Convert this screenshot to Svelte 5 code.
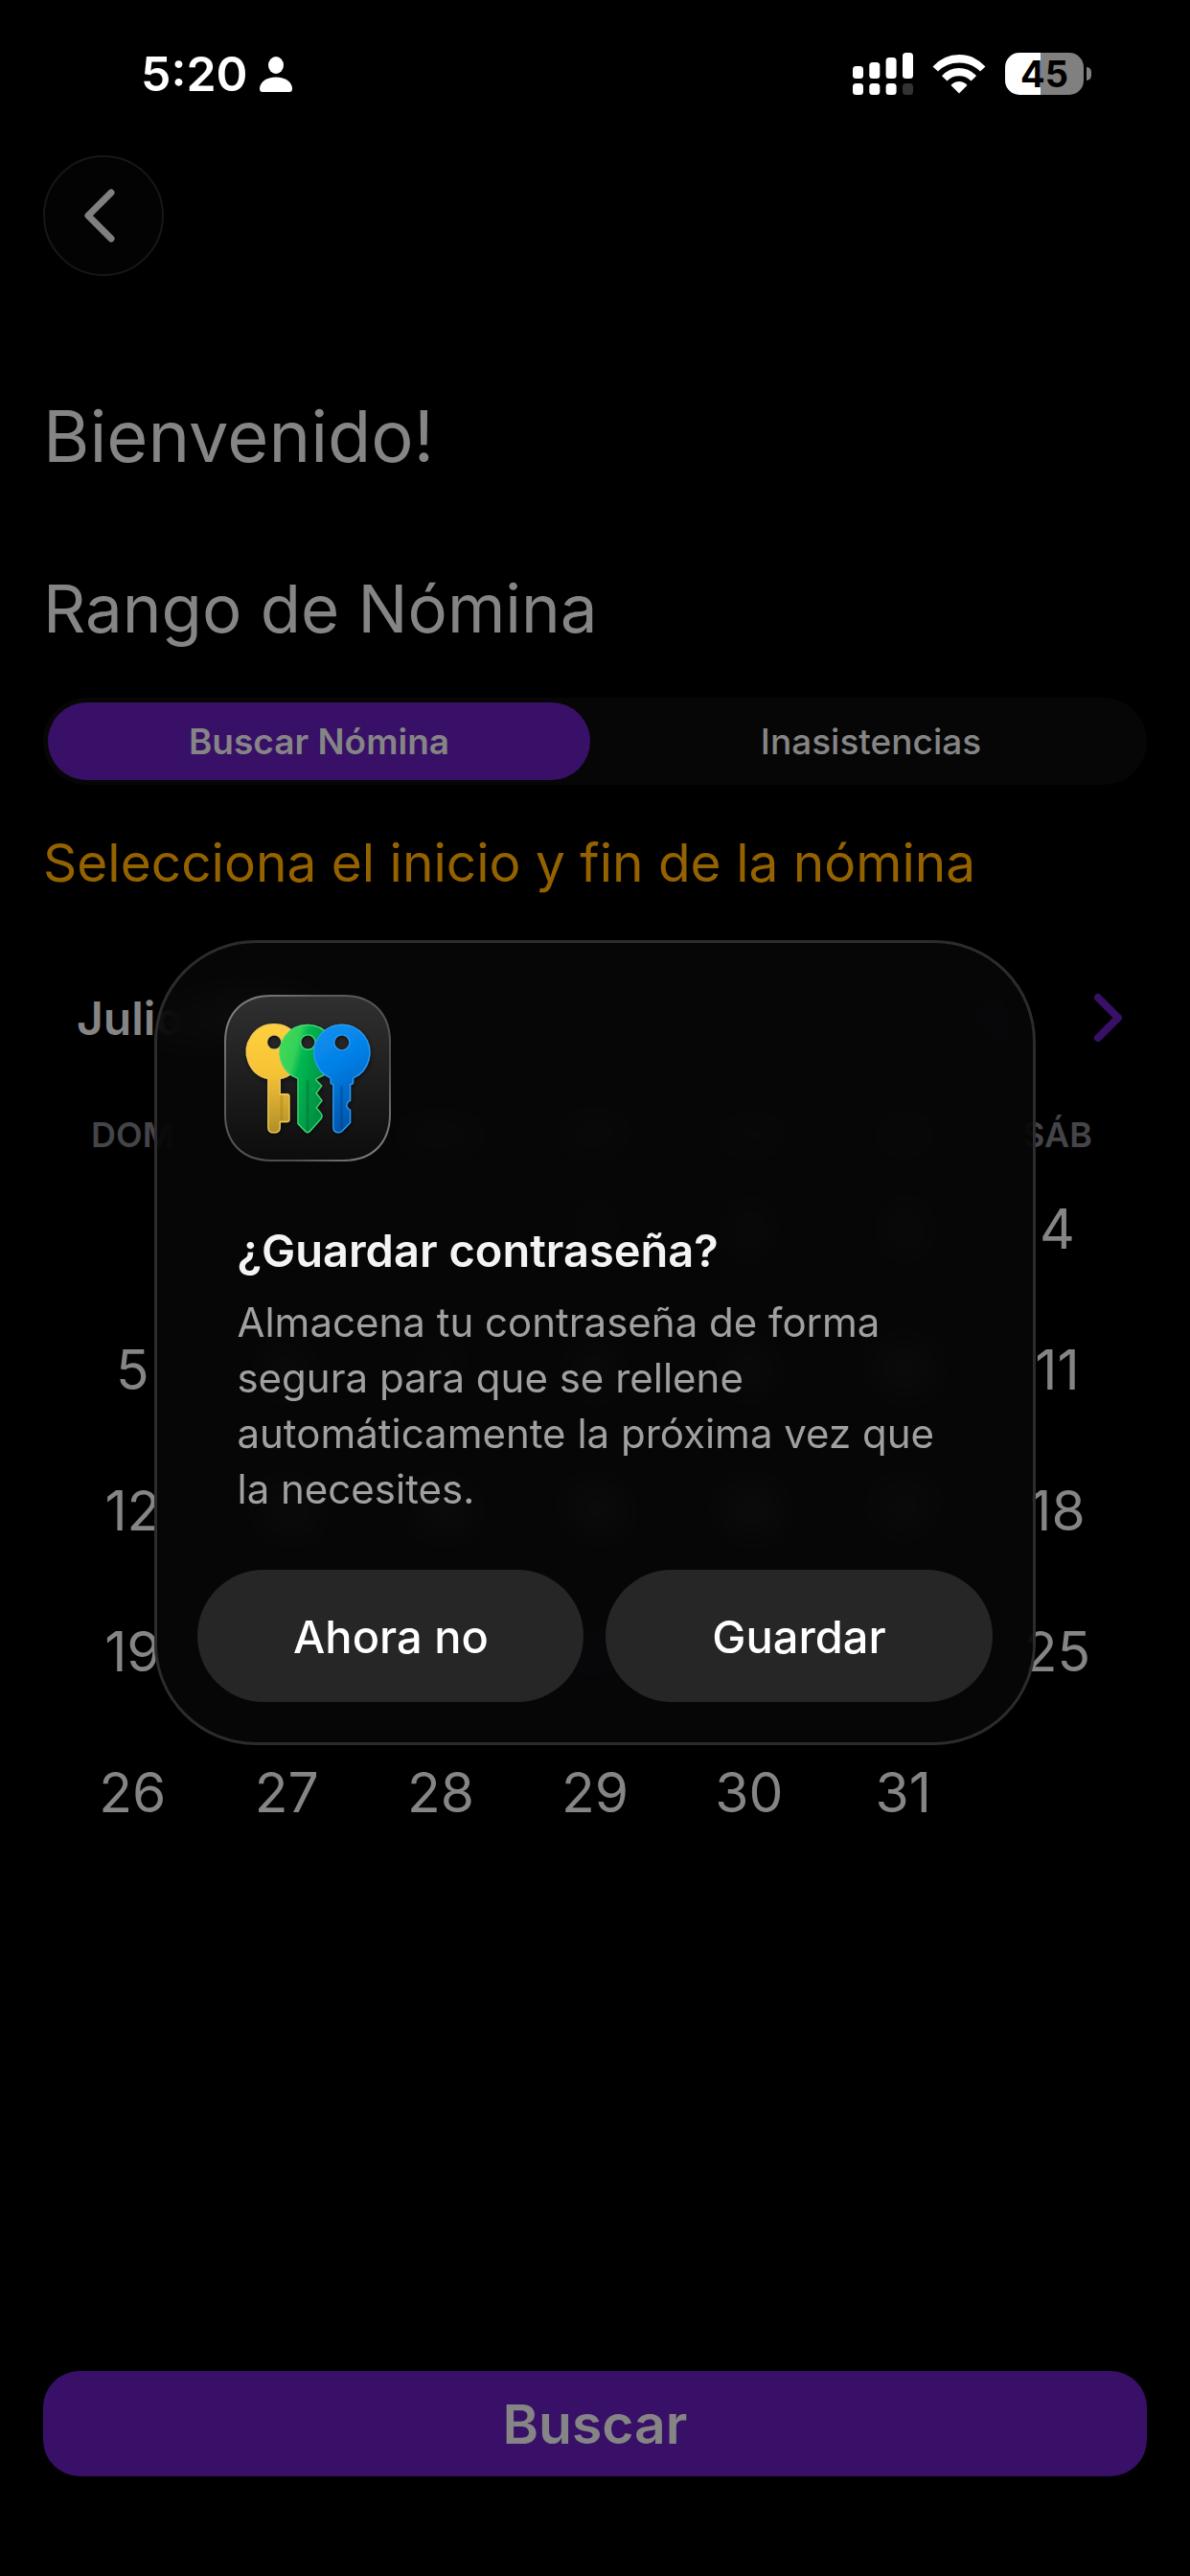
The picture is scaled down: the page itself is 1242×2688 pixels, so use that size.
<script>
  const weekdays = ["DOM", "LUN", "MAR", "MIÉ", "JUE", "VIE", "SÁB"];
  const tabs = ["Buscar Nómina", "Inasistencias"];
  const firstWeekday = 3;
  const daysInMonth = 31;
  const today = 22;

  let activeTab = $state(0);

  const weeks = [];
  for (let start = 1 - firstWeekday; start <= daysInMonth; start += 7) {
    weeks.push(
      Array.from({ length: 7 }, (_, i) => {
        const day = start + i;
        return day >= 1 && day <= daysInMonth ? day : null;
      })
    );
  }
</script>

<div class="screen">
  <div class="status">
    <div class="status-left">
      <span class="time">5:20</span>
      <svg width="34" height="37" viewBox="0 0 34 37" fill="#fff">
        <ellipse cx="17" cy="9" rx="8" ry="9" />
        <path d="M3 37Q0 37 0 33.500C0 27 7 21.500 17 21.500S34 27 34 33.500Q34 37 31 37Z" />
      </svg>
    </div>
    <div class="status-right">
      <svg width="63" height="44" viewBox="0 0 63 44" fill="#fff">
        <rect x="0" y="14" width="11" height="13" rx="3.500" />
        <rect x="17.300" y="10" width="11" height="17" rx="3.500" />
        <rect x="34.600" y="5" width="11" height="22" rx="3.500" />
        <rect x="52" y="0" width="11" height="27" rx="3.500" />
        <rect x="0" y="32" width="11" height="12" rx="3.500" />
        <rect x="17.300" y="32" width="11" height="12" rx="3.500" />
        <rect x="34.600" y="32" width="11" height="12" rx="3.500" />
        <rect x="52" y="32" width="11" height="12" rx="3.500" fill="#333" />
      </svg>
      <svg class="wifi" width="56" height="42" viewBox="0 0 56 42" fill="#fff">
        <path d="M0.500 13.500Q12 1 28 1T55.500 13.500L50 18.500Q41 9.500 28 9.500T6 18.500Z" />
        <path d="M10 23.200Q17.500 15 28 15T46 23.200L40.500 28.500Q35.500 23.300 28 23.300T15.500 28.500Z" />
        <path d="M19.500 33Q23 29 28 29T36.500 33L28 41.500Z" />
      </svg>
      <div class="battery"><span>45</span></div>
    </div>
  </div>

  <main>
    <button class="back" aria-label="Atrás">
      <svg width="32" height="56" viewBox="0 0 32 56" fill="none" stroke="#808080" stroke-width="7" stroke-linecap="round" stroke-linejoin="round">
        <path d="M28 4L4 28L28 52" />
      </svg>
    </button>

    <h1>Bienvenido!</h1>
    <h2>Rango de Nómina</h2>

    <div class="tabs">
      {#each tabs as tab, i}
        <button class:active={activeTab === i} onclick={() => (activeTab = i)}>{tab}</button>
      {/each}
    </div>

    <p class="hint">Selecciona el inicio y fin de la nómina</p>

    <section class="calendar">
      <div class="month">
        <span>Julio 2026</span>
        <svg class="more" width="20" height="34" viewBox="0 0 32 56" fill="none">
          <path d="M4 4L28 28L4 52" />
        </svg>
        <button class="prev" aria-label="Mes anterior">
          <svg width="32" height="52" viewBox="0 0 32 52" fill="none">
            <path d="M27 5L6 26L27 47" />
          </svg>
        </button>
        <button aria-label="Mes siguiente">
          <svg width="32" height="52" viewBox="0 0 32 52" fill="none">
            <path d="M5 5L26 26L5 47" />
          </svg>
        </button>
      </div>
      <table>
        <thead>
          <tr>
            {#each weekdays as name}
              <th>{name}</th>
            {/each}
          </tr>
        </thead>
        <tbody>
          {#each weeks as week}
            <tr>
              {#each week as day}
                <td>
                  {#if day}
                    <button class:today={day === today}>{day}</button>
                  {/if}
                </td>
              {/each}
            </tr>
          {/each}
        </tbody>
      </table>
    </section>

    <button class="search">Buscar</button>
  </main>

  <div class="overlay">
    <div class="dialog" role="dialog" aria-modal="true" aria-labelledby="dialog-title">
      <svg class="app-icon" viewBox="43 54 520 520">
        <defs>
          <linearGradient id="tile" x1="0" y1="0" x2="0" y2="1">
            <stop offset="0" stop-color="#303030" />
            <stop offset="1" stop-color="#0c0c0c" />
          </linearGradient>
          <linearGradient id="rim" x1="0" y1="0" x2="1" y2="1">
            <stop offset="0" stop-color="#8a8a8a" />
            <stop offset="0.300" stop-color="#5c5c5c" />
            <stop offset="0.700" stop-color="#4c4c4c" />
            <stop offset="1" stop-color="#8a8a8a" />
          </linearGradient>
          <linearGradient id="yellow" x1="0" y1="0" x2="0" y2="1">
            <stop offset="0" stop-color="#ffd03c" />
            <stop offset="0.450" stop-color="#f6c336" />
            <stop offset="1" stop-color="#b08f2a" />
          </linearGradient>
          <linearGradient id="green" x1="0" y1="0.200" x2="0.800" y2="0.600">
            <stop offset="0" stop-color="#41d957" />
            <stop offset="0.300" stop-color="#34d058" />
            <stop offset="0.440" stop-color="#04b850" />
            <stop offset="1" stop-color="#009043" />
          </linearGradient>
          <linearGradient id="blue" x1="0" y1="0" x2="0.300" y2="1">
            <stop offset="0" stop-color="#0a92f2" />
            <stop offset="0.450" stop-color="#0580e6" />
            <stop offset="1" stop-color="#0057ae" />
          </linearGradient>
          <filter id="shade" x="-20%" y="-20%" width="140%" height="140%">
            <feDropShadow dx="2" dy="5" stdDeviation="6" flood-color="#000" flood-opacity="0.600" />
          </filter>
        </defs>
        <path
          d="M190 57H416C505 57 560 112 560 201V427C560 516 505 571 416 571H190C101 571 46 516 46 427V201C46 112 101 57 190 57Z"
          fill="url(#tile)"
          stroke="url(#rim)"
          stroke-width="6"
        />
        <g filter="url(#shade)" stroke-width="4" stroke-linejoin="round" fill-rule="evenodd">
          <path
            d="M180 316A86 86 0 1 1 217 316V364H239Q246 364 246 371V443Q246 450 239 450H217V467Q217 484 198 484T180 467ZM199 179a23 23 0 1 0 0.100 0Z"
            fill="url(#yellow)"
            stroke="#f3c956"
          />
          <path d="M218 368H226V446H218Z" fill="#9a7710" opacity="0.350" />
          <path
            d="M273 315A86 86 0 1 1 332 315L329 320L347 338L330 361L348 384L330 407Q348 424 348 432Q348 438 343 443L310 480Q303 487 296 480L273 456ZM304 179a23 23 0 1 0 0.100 0Z"
            fill="url(#green)"
            stroke="#3fd873"
          />
          <path d="M299 320H307V478H299Z" fill="#006b32" opacity="0.450" />
          <path
            d="M375 314A87 87 0 1 1 445 314V328Q445 333 436 334V384Q425 389 425 400Q425 408 436 414V453L410 480Q405 484 399 484Q383 484 383 466V334Q375 333 375 328ZM410 179a24 24 0 1 0 0.100 0Z"
            fill="url(#blue)"
            stroke="#2a9bf5"
          />
          <path d="M405 337H413V476H405Z" fill="#00448e" opacity="0.500" />
        </g>
      </svg>
      <h3 id="dialog-title">¿Guardar contraseña?</h3>
      <p>
        Almacena tu contraseña de forma segura para que se rellene automáticamente la próxima vez que
        la necesites.
      </p>
      <div class="actions">
        <button>Ahora no</button>
        <button>Guardar</button>
      </div>
    </div>
  </div>
</div>

<style>
  :global(body) {
    background: #000;
  }

  .screen {
    display: flex;
    flex-direction: column;
    min-height: 100vh;
    background: #000;
    color: #858585;
    font-family: Inter, "Liberation Sans", sans-serif;
  }

  button {
    padding: 0;
    border: 0;
    background: none;
    color: inherit;
    font: inherit;
  }

  svg {
    display: block;
  }

  h1,
  h2,
  h3,
  p {
    margin: 0;
    font-weight: 400;
  }

  .status {
    display: flex;
    justify-content: space-between;
    align-items: center;
    box-sizing: border-box;
    height: 162px;
    padding: 0 103px 8px 147px;
    color: #fff;
  }

  .status-left,
  .status-right {
    display: flex;
    align-items: center;
  }

  .status-left {
    gap: 12px;
  }

  .status-right {
    gap: 20px;
  }

  .time {
    font-size: 50px;
    font-weight: 600;
  }

  .battery {
    position: relative;
    width: 82px;
    height: 44px;
    margin-right: 8px;
    border-radius: 15px;
    background: linear-gradient(90deg, #fff 45%, #808080 45%);
    color: #000;
    font-size: 38px;
    font-weight: 700;
    line-height: 44px;
    text-align: center;
  }

  .battery::after {
    content: "";
    position: absolute;
    top: 15px;
    right: -8px;
    width: 5px;
    height: 14px;
    border-radius: 0 5px 5px 0;
    background: #808080;
  }

  main {
    display: flex;
    flex: 1;
    flex-direction: column;
    padding: 0 45px 104px;
  }

  .back {
    display: flex;
    justify-content: center;
    align-items: center;
    box-sizing: border-box;
    width: 126px;
    height: 126px;
    padding-right: 8px;
    border: 2px solid #171717;
    border-radius: 50%;
    background: #030303;
  }

  h1 {
    margin-top: 119px;
    font-size: 74px;
    line-height: 96px;
  }

  h2 {
    margin-top: 88px;
    font-size: 69px;
    line-height: 88px;
  }

  .tabs {
    display: grid;
    grid-template-columns: 1fr 1fr;
    gap: 10px;
    margin-top: 49px;
    padding: 5px;
    border-radius: 46px;
    background: #060606;
  }

  .tabs button {
    height: 81px;
    border-radius: 41px;
    font-size: 37px;
    font-weight: 500;
  }

  .tabs .active {
    background: #381067;
    font-weight: 600;
  }

  .hint {
    margin-top: 45px;
    color: #946200;
    font-size: 55px;
    line-height: 72px;
  }

  .calendar {
    margin: 89px 13px 0;
  }

  .month {
    display: flex;
    align-items: center;
    height: 74px;
    margin-bottom: 60px;
    padding: 0 11px 0 22px;
    color: #858585;
    font-size: 48px;
    font-weight: 600;
  }

  .month path {
    stroke: #381067;
    stroke-width: 8;
    stroke-linecap: round;
    stroke-linejoin: round;
  }

  .more {
    margin-left: 24px;
  }

  .prev {
    margin: 0 90px 0 auto;
  }

  table {
    width: 100%;
    border-collapse: collapse;
    table-layout: fixed;
  }

  th,
  td {
    padding: 0;
    text-align: center;
  }

  th {
    height: 50px;
    color: #444449;
    font-size: 36px;
    font-weight: 600;
  }

  td {
    height: 147px;
    font-size: 57px;
  }

  td button {
    width: 120px;
    height: 120px;
  }

  td .today {
    color: #381067;
  }

  .search {
    height: 110px;
    margin-top: auto;
    border-radius: 38px;
    background: #381067;
    font-size: 57px;
    font-weight: 600;
  }

  .overlay {
    position: fixed;
    inset: 0;
    display: flex;
    justify-content: center;
    align-items: center;
    padding-top: 114px;
  }

  .dialog {
    box-sizing: border-box;
    width: 74%;
    padding: 54px 42px 42px;
    border: 3px solid #2c2c2c;
    border-radius: 106px;
    background: rgba(7, 7, 7, 0.84);
    backdrop-filter: blur(20px);
  }

  .app-icon {
    width: 174px;
    height: 174px;
    margin-left: 28px;
  }

  h3,
  .dialog p {
    margin: 0 41px;
  }

  h3 {
    margin-top: 61px;
    color: #f4f4f4;
    font-size: 47px;
    font-weight: 600;
    line-height: 64px;
  }

  .dialog p {
    margin-top: 14px;
    color: #a0a0a0;
    font-size: 42px;
    line-height: 58px;
  }

  .actions {
    display: grid;
    grid-template-columns: 1fr 1fr;
    gap: 23px;
    margin-top: 55px;
  }

  .actions button {
    height: 138px;
    border-radius: 69px;
    background: #262626;
    color: #fff;
    font-size: 47px;
    font-weight: 500;
  }
</style>
